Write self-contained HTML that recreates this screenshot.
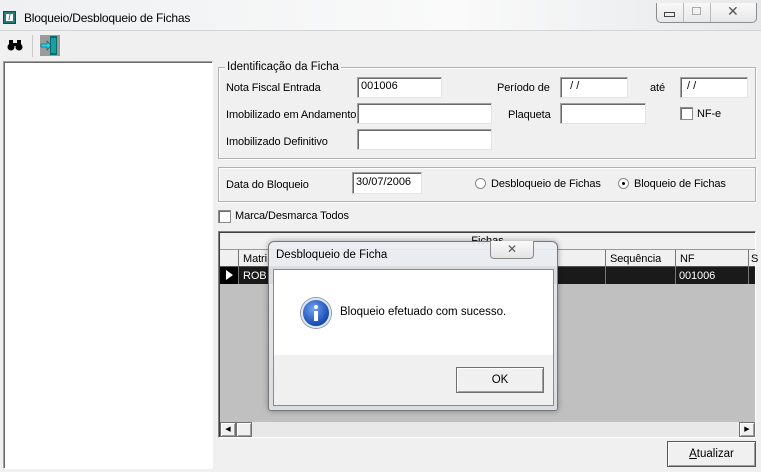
<!DOCTYPE html>
<html><head><style>
*{margin:0;padding:0;box-sizing:border-box}
body{width:761px;height:472px;position:relative;overflow:hidden;background:#f0f0f0;font-family:"Liberation Sans",sans-serif;font-size:11px;color:#000}
.a{position:absolute}
.l{position:absolute;font-size:11px;letter-spacing:-0.1px}
.inp{position:absolute;background:#fff;border:1px solid #a0a0a0;border-right-color:#e3e3e3;border-bottom-color:#e3e3e3;box-shadow:inset 1px 1px 0 #696969;padding:2px 3px;font-size:11px}
.grp{position:absolute;border:1px solid #b0b0b0;box-shadow:1px 1px 0 #fff inset,1px 1px 0 #fff}
.cb{position:absolute;width:13px;height:13px;background:#fff;border:1px solid #8a8a8a;box-shadow:inset 1px 1px 0 #707070}
.btn{position:absolute;background:#f0f0f0;border:1px solid #707070;box-shadow:inset 1px 1px 0 #fff,inset -1px -1px 0 #a0a0a0;text-align:center}
</style></head><body>
<div class="a" style="left:0;top:0;width:761px;height:31px;background:linear-gradient(90deg,#eef0f2,#fafafa 60%,#e6e8ea);border-bottom:1px solid #d4d4d4"></div>
<div class="a" style="left:3px;top:11px;width:13px;height:13px;background:#1e7d7a;border:1px solid #0c4f4c"><div style="position:absolute;left:2px;top:2px;width:7px;height:7px;background:#fff;color:#1e7d7a;font-size:8px;line-height:7px;font-weight:bold;text-align:center">/</div></div>
<div class="a" style="left:24px;top:11px;font-size:12px;letter-spacing:-0.2px">Bloqueio/Desbloqueio de Fichas</div>
<div class="a" style="left:656px;top:3px;width:101px;height:20px;border:1px solid #8c8c8c;border-top:none;border-radius:0 0 5px 5px;background:linear-gradient(#f8f8f8,#e8e8e8)"></div>
<div class="a" style="left:683px;top:3px;width:1px;height:19px;background:#bbb"></div>
<div class="a" style="left:710px;top:3px;width:1px;height:19px;background:#bbb"></div>
<div class="a" style="left:664px;top:12px;width:11px;height:5px;border:1px solid #444"></div>
<div class="a" style="left:692px;top:7px;width:9px;height:8px;border:1px solid #aaa"></div>
<div class="a" style="left:727px;top:3px;font-size:14px;color:#555">✕</div>
<div class="a" style="left:7px;top:38px;width:16px;height:14px"><svg width="16" height="14"><circle cx="4" cy="9" r="3.5" fill="#000"/><circle cx="12" cy="9" r="3.5" fill="#000"/><rect x="2" y="2" width="4" height="6" fill="#000"/><rect x="10" y="2" width="4" height="6" fill="#000"/><rect x="6" y="5" width="4" height="3" fill="#000"/></svg></div>
<div class="a" style="left:32px;top:35px;width:1px;height:22px;background:#c8c8c8"></div>
<div class="a" style="left:40px;top:35px;width:20px;height:21px;background:#9a9a9a"><svg width="20" height="21"><rect x="10" y="1" width="7" height="19" fill="#0a6a6a"/><rect x="11" y="3" width="5" height="15" fill="#18a0a0"/><path d="M1 9h6v-3l4 4.5-4 4.5v-3H1z" fill="#2ad0f0" stroke="#055" stroke-width=".6"/></svg></div>
<div class="a" style="left:3px;top:61px;width:210px;height:408px;background:#fff;border:1px solid #a0a0a0;border-right-color:#fff;border-bottom-color:#fff;box-shadow:inset 1px 1px 0 #696969"></div>
<div class="grp" style="left:218px;top:67px;width:538px;height:92px"></div>
<div class="a" style="left:225px;top:61px;background:#f0f0f0;padding:0 2px;font-size:11.5px">Identificação da Ficha</div>
<div class="l" style="left:226px;top:82px">Nota Fiscal Entrada</div>
<div class="inp" style="left:357px;top:77px;width:85px;height:21px">001006</div>
<div class="l" style="left:497px;top:82px">Período de</div>
<div class="inp" style="left:560px;top:77px;width:68px;height:21px">&nbsp;&nbsp;/ /</div>
<div class="l" style="left:650px;top:82px">até</div>
<div class="inp" style="left:680px;top:77px;width:68px;height:21px">&nbsp;/ /</div>
<div class="l" style="left:226px;top:109px">Imobilizado em Andamento</div>
<div class="inp" style="left:357px;top:103px;width:135px;height:21px"></div>
<div class="l" style="left:508px;top:109px">Plaqueta</div>
<div class="inp" style="left:560px;top:103px;width:86px;height:21px"></div>
<div class="cb" style="left:680px;top:107px"></div>
<div class="l" style="left:697px;top:108px">NF-e</div>
<div class="l" style="left:226px;top:136px">Imobilizado Definitivo</div>
<div class="inp" style="left:357px;top:129px;width:135px;height:21px"></div>
<div class="grp" style="left:218px;top:167px;width:538px;height:35px"></div>
<div class="l" style="left:226px;top:179px">Data do Bloqueio</div>
<div class="inp" style="left:352px;top:172px;width:70px;height:22px;font-size:11px;padding-top:3px">30/07/2006</div>
<div class="a" style="left:475px;top:178px;width:11px;height:11px;border-radius:50%;border:1px solid #888;background:#fff"></div>
<div class="l" style="left:491px;top:178px">Desbloqueio de Fichas</div>
<div class="a" style="left:618px;top:178px;width:11px;height:11px;border-radius:50%;border:1px solid #888;background:#fff"><div style="position:absolute;left:3px;top:3px;width:3px;height:3px;background:#000;border-radius:50%"></div></div>
<div class="l" style="left:634px;top:178px">Bloqueio de Fichas</div>
<div class="cb" style="left:218px;top:210px"></div>
<div class="l" style="left:235px;top:210px">Marca/Desmarca Todos</div>
<div class="a" style="left:218px;top:231px;width:538px;height:207px;background:#c0c0c0;border:1px solid #808080;border-right-color:#fff;border-bottom-color:#fff;box-shadow:inset 1px 1px 0 #404040"></div>
<div class="a" style="left:220px;top:233px;width:535px;height:17px;background:#f0f0f0;border-bottom:1px solid #999;text-align:center;font-size:11px;line-height:17px">Fichas</div>
<div class="a" style="left:220px;top:250px;width:535px;height:17px;background:#f0f0f0;border-bottom:1px solid #555"></div>
<div class="a" style="left:238px;top:250px;width:1px;height:34px;background:#777"></div>
<div class="l" style="left:243px;top:253px">Matri</div>
<div class="a" style="left:605px;top:250px;width:1px;height:34px;background:#777"></div>
<div class="l" style="left:610px;top:253px">Sequência</div>
<div class="a" style="left:675px;top:250px;width:1px;height:34px;background:#777"></div>
<div class="l" style="left:680px;top:253px">NF</div>
<div class="a" style="left:748px;top:250px;width:1px;height:34px;background:#777"></div>
<div class="l" style="left:751px;top:253px">S</div>
<div class="a" style="left:220px;top:267px;width:535px;height:17px;background:#1a1a1a"></div>
<div class="a" style="left:220px;top:267px;width:18px;height:17px;background:#000"></div>
<div class="a" style="left:238px;top:267px;width:1px;height:17px;background:#777"></div>
<div class="a" style="left:605px;top:267px;width:1px;height:17px;background:#777"></div>
<div class="a" style="left:675px;top:267px;width:1px;height:17px;background:#777"></div>
<div class="a" style="left:748px;top:267px;width:1px;height:17px;background:#777"></div>
<div class="a" style="left:226px;top:270px;width:0;height:0;border-left:7px solid #fff;border-top:5px solid transparent;border-bottom:5px solid transparent"></div>
<div class="l" style="left:243px;top:270px;color:#fff">ROB</div>
<div class="l" style="left:679px;top:270px;color:#fff">001006</div>
<div class="a" style="left:220px;top:422px;width:535px;height:15px;background:#e8e8e8"></div>
<div class="btn" style="left:220px;top:422px;width:16px;height:15px;font-size:7px;line-height:13px">◀</div>
<div class="btn" style="left:236px;top:422px;width:16px;height:15px"></div>
<div class="btn" style="left:739px;top:422px;width:16px;height:15px;font-size:7px;line-height:13px">▶</div>
<div class="btn" style="left:667px;top:441px;width:89px;height:26px;font-size:11.5px;line-height:24px;border-color:#555"><u>A</u>tualizar</div>
<div class="a" style="left:268px;top:241px;width:290px;height:170px;border:1px solid #777;border-radius:6px 6px 3px 3px;background:linear-gradient(180deg,rgba(235,238,242,.92),rgba(220,224,228,.92));box-shadow:0 0 6px rgba(0,0,0,.35)"></div>
<div class="a" style="left:276px;top:249px;font-size:11.5px">Desbloqueio de Ficha</div>
<div class="a" style="left:490px;top:241px;width:44px;height:18px;border:1px solid #888;border-top:none;border-radius:0 0 4px 4px;background:linear-gradient(#fafafa,#e4e4e4);text-align:center;font-size:12px;color:#555;line-height:16px">✕</div>
<div class="a" style="left:273px;top:269px;width:281px;height:137px;border:1px solid #8a8a8a;background:#f0f0f0"></div>
<div class="a" style="left:274px;top:270px;width:279px;height:85px;background:#fff"></div>
<div class="a" style="left:301px;top:298px;width:30px;height:30px;border-radius:50%;background:radial-gradient(circle at 40% 35%,#6fa3f0,#1e4fb8 65%,#0c2c7a);border:2px solid #dfe6ef;box-shadow:0 0 0 1px #8a99ad"><div style="position:absolute;left:11px;top:5px;width:4px;height:4px;border-radius:50%;background:#fff"></div><div style="position:absolute;left:11px;top:11px;width:4px;height:10px;background:#fff"></div></div>
<div class="a" style="left:340px;top:306px;font-size:11.5px">Bloqueio efetuado com sucesso.</div>
<div class="btn" style="left:456px;top:367px;width:88px;height:26px;font-size:11.5px;line-height:24px;border-color:#707070">OK</div>
</body></html>
